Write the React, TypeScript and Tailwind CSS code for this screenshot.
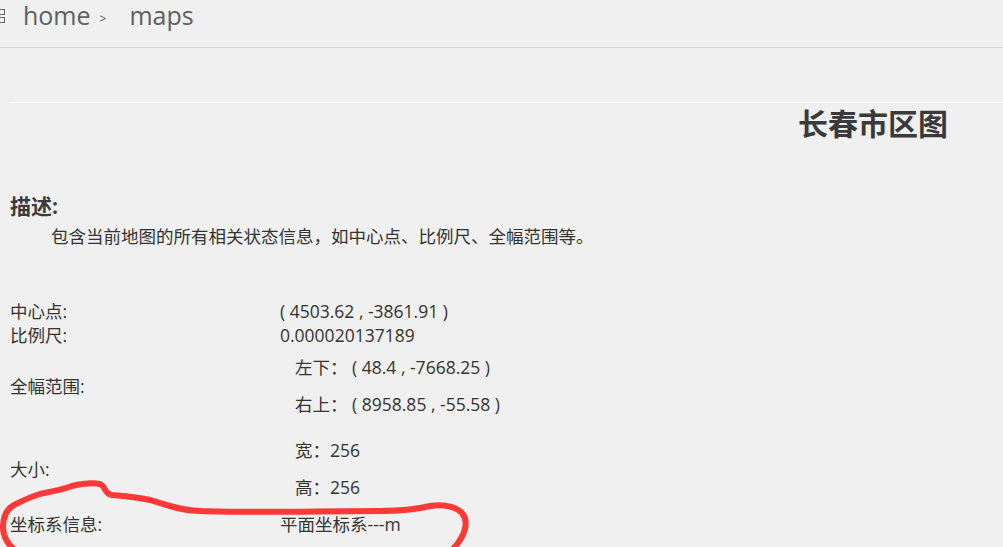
import React from 'react'

const font = { fontFamily: '"Open Sans", "Noto Sans CJK SC", sans-serif' }

const rows = [
  { label: '中心点:', value: ['( 4503.62 , -3861.91 )'] },
  { label: '比例尺:', value: ['0.000020137189'] },
]

export default function App() {
  return (
    <div className='relative w-full h-[547px] overflow-hidden bg-[#f0f0f0] text-[#333]' style={font}>
      <Header />
      <div className='mt-[54px] ml-[10px] border-t border-[#f8f8f8]'></div>
      <h1 className='mt-[6px] pr-[55px] text-right text-[30px] leading-[30px] font-bold text-[#3a3a3a]'>长春市区图</h1>

      <div className='px-[10px]'>
        <h5 className='mt-[55px] text-[21px] leading-[24px] font-bold text-[#3a3a3a]'>描述:</h5>
        <p className='mt-[6px] pl-[41px] text-[17.5px] leading-[24px]'>包含当前地图的所有相关状态信息，如中心点、比例尺、全幅范围等。</p>

        <div className='mt-[51px] flex flex-col text-[17.5px]'>
          {rows.map((r) => (
            <div key={r.label} className='flex h-[24px] items-center'>
              <div className='w-[270px]'>{r.label}</div>
              <div>{r.value}</div>
            </div>
          ))}
          <div className='h-[2px]'></div>
          <InfoBlock label='全幅范围:' items={['左下： ( 48.4 , -7668.25 )', '右上： ( 8958.85 , -55.58 )']} />
          <div className='h-[9px]'></div>
          <InfoBlock label='大小:' items={['宽：256', '高：256']} />
          <div className='h-[6px]'></div>
          <div className='flex h-[24px] items-center'>
            <div className='w-[270px]'>坐标系信息:</div>
            <div>平面坐标系---m</div>
          </div>
        </div>
      </div>

      {/* hand drawn red mark */}
      <svg className='absolute inset-0 pointer-events-none' width='1003' height='547' viewBox='0 0 1003 547'>
        <path
          d='M14 549 C8 545 3 536 3 527 C3 517 7 508 16 504 C24 500 30 497 40 494 C52 491 62 490 72 486 C80 484 90 482 100 484 C106 486 104 494 112 495 C124 496 138 497 150 500 C165 504 176 510 200 511 C250 513 320 511 380 511 C405 511 418 509 430 506 C442 504 455 506 462 513 C468 520 466 531 460 540 C457 545 454 548 452 550'
          fill='none'
          stroke='#ff3838'
          strokeWidth='6'
          strokeLinecap='round'
          strokeLinejoin='round'
        />
      </svg>
    </div>
  )
}

const Header = () => {
  return (
    <div className='h-[48px] border-b border-[#cfd8e8] flex items-start'>
      <div className='flex items-center h-[30px] text-[25px] leading-[30px] text-[#5f5f5f]'>
        <svg className='-ml-[9px] mt-[2px]' width='14' height='16' viewBox='0 0 14 16'>
          <rect x='0.5' y='1.5' width='5' height='5' fill='none' stroke='#666' />
          <rect x='8.5' y='1.5' width='5' height='5' fill='none' stroke='#666' />
          <rect x='0.5' y='9.5' width='5' height='5' fill='none' stroke='#666' />
          <rect x='8.5' y='9.5' width='5' height='5' fill='none' stroke='#666' />
        </svg>
        <span className='ml-[18px]'>home</span>
        <span className='ml-[9px] mt-[8px] text-[12px] leading-[12px] text-[#555]'>&gt;</span>
        <span className='ml-[23px]'>maps</span>
      </div>
    </div>
  )
}

const InfoBlock = ({ label, items }: any) => {
  return (
    <div className='flex items-center'>
      <div className='w-[270px]'>{label}</div>
      <div className='flex flex-col pl-[15px]'>
        {items.map((i: string) => (
          <div key={i} className='h-[37px] flex items-center'>{i}</div>
        ))}
      </div>
    </div>
  )
}
